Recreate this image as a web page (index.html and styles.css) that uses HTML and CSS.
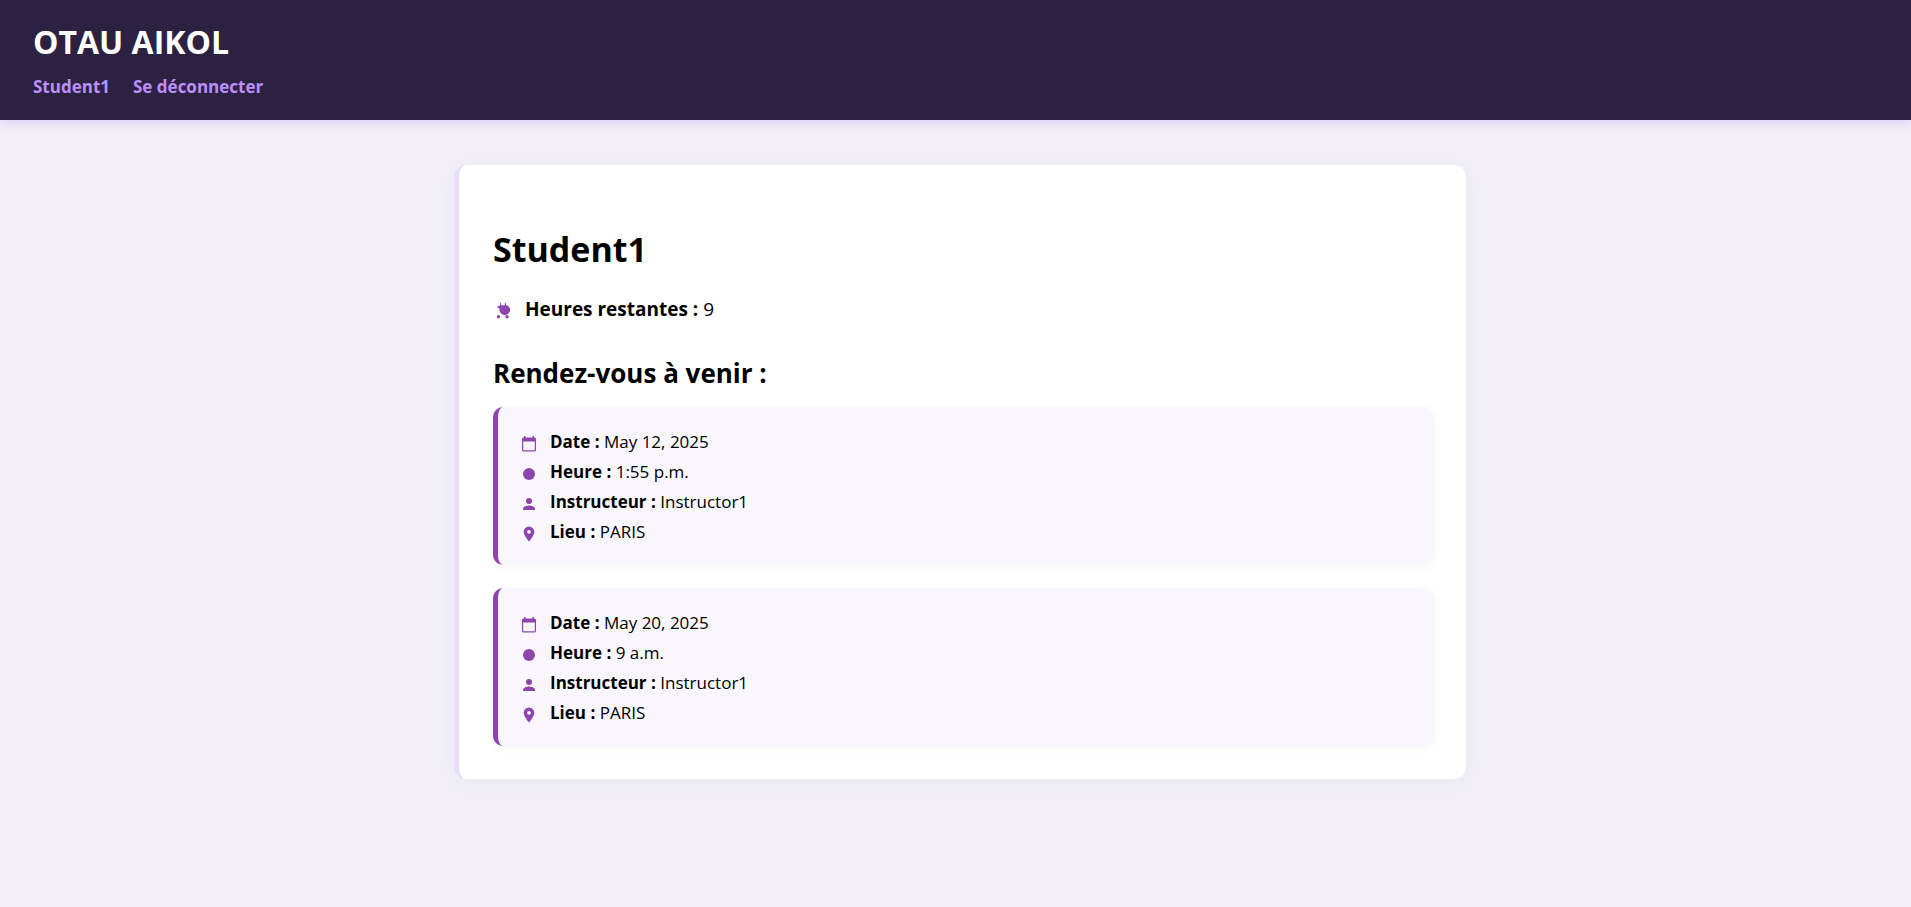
FILE: index.html
```html
<!DOCTYPE html>
<html lang="fr">
<head>
<meta charset="utf-8">
<title>OTAU AIKOL</title>
<link rel="stylesheet" href="styles.css">
</head>
<body>
<svg class="sprite" aria-hidden="true">
  <symbol id="calendar" viewBox="0 0 16 16"><path fill-rule="evenodd" d="M3 0h1.500v1.500h7V0H13v1.500h.5A1.500 1.500 0 0 1 15 3v11a1.500 1.500 0 0 1-1.500 1.500h-11A1.500 1.500 0 0 1 1 14V3a1.500 1.500 0 0 1 1.500-1.500H3zM2.200 5.500v8.700h11.600V5.500z"/></symbol>
  <symbol id="dot" viewBox="0 0 16 16"><circle cx="8" cy="8" r="6"/></symbol>
  <symbol id="person" viewBox="0 0 16 16"><circle cx="8" cy="5" r="3"/><path d="M2 14v-1.200c0-2 4-3.200 6-3.200s6 1.200 6 3.200V14z"/></symbol>
  <symbol id="pin" viewBox="0 0 16 16"><path fill-rule="evenodd" d="M8 .5a5.300 5.300 0 0 0-5.300 5.300C2.700 9.800 8 15.500 8 15.500s5.300-5.700 5.300-9.700A5.300 5.300 0 0 0 8 .5zM8 7.700a1.900 1.900 0 1 1 0-3.800 1.900 1.900 0 0 1 0 3.800z"/></symbol>
  <symbol id="hours" viewBox="0 0 16 16"><path d="M4 0h1.100v2.300h3.800V0H10v2.300h1l2 1.500 1 2v2.700l-2 2.500-2.500 1h-2L5 10.500 3.500 8.300V5.500L1.500 5V3.500L4 2.500z"/><circle cx="2.500" cy="13.700" r="1.700"/><circle cx="11" cy="13.700" r="1.700"/></symbol>
</svg>
<header class="site-header">
  <div class="brand">OTAU AIKOL</div>
  <nav class="nav">
    <a href="#">Student1</a>
    <a href="#">Se déconnecter</a>
  </nav>
</header>
<main class="page">
  <section class="profile">
    <h1 class="name">Student1</h1>
    <p class="hours"><svg class="icon"><use href="#hours"/></svg><span><strong>Heures restantes :</strong> 9</span></p>
    <h2 class="subtitle">Rendez-vous à venir :</h2>
    <ul class="appointments">
      <li class="appointment">
        <p class="row"><svg class="icon"><use href="#calendar"/></svg><span><strong>Date :</strong> May 12, 2025</span></p>
        <p class="row"><svg class="icon"><use href="#dot"/></svg><span><strong>Heure :</strong> 1:55 p.m.</span></p>
        <p class="row"><svg class="icon"><use href="#person"/></svg><span><strong>Instructeur :</strong> Instructor1</span></p>
        <p class="row"><svg class="icon"><use href="#pin"/></svg><span><strong>Lieu :</strong> PARIS</span></p>
      </li>
      <li class="appointment">
        <p class="row"><svg class="icon"><use href="#calendar"/></svg><span><strong>Date :</strong> May 20, 2025</span></p>
        <p class="row"><svg class="icon"><use href="#dot"/></svg><span><strong>Heure :</strong> 9 a.m.</span></p>
        <p class="row"><svg class="icon"><use href="#person"/></svg><span><strong>Instructeur :</strong> Instructor1</span></p>
        <p class="row"><svg class="icon"><use href="#pin"/></svg><span><strong>Lieu :</strong> PARIS</span></p>
      </li>
    </ul>
  </section>
</main>
</body>
</html>
```
FILE: styles.css
```css
* { box-sizing: border-box; }
body {
  margin: 0;
  background: #f1eff5;
  color: #000;
  font-family: "Open Sans", "Noto Sans", sans-serif;
  font-size: 17px;
}
h1, h2, p, ul { margin: 0; padding: 0; }
.sprite { display: none; }
.site-header {
  padding: 20px 33px;
  background: #2d2142;
  box-shadow: 0 2px 10px #dccbfa;
}
.brand { color: #fff; font-size: 32px; font-weight: 700; line-height: 44px; }
.nav { display: flex; gap: 23px; margin-top: 10px; }
.nav a {
  color: #bb8fff;
  font-size: 17px;
  font-weight: 700;
  line-height: 26px;
  text-decoration: none;
}
.page { padding: 45px 20px 45px 29px; }
.profile {
  max-width: 1012px;
  margin: 0 auto;
  padding: 56px 32px 33px 34px;
  background: #fff;
  border-left: 5px solid #e8dcff;
  border-radius: 12px;
  box-shadow: 0 4px 20px rgba(90, 50, 150, 0.03);
}
.name { font-size: 34px; line-height: 56px; }
.hours { display: flex; align-items: center; gap: 13px; margin-top: 16px; font-size: 19px; line-height: 32px; }
.hours .icon { margin-left: 3px; }
.subtitle { margin-top: 28px; font-size: 26px; line-height: 40px; }
.appointments { display: grid; gap: 23px; margin-top: 14px; list-style: none; }
.appointment {
  padding: 20px 23px 18px;
  background: #f9f7fd;
  border-left: 5px solid #8e44ad;
  border-radius: 10px;
  box-shadow: 0 2px 8px rgba(0, 0, 0, 0.04);
}
.row { display: flex; align-items: center; gap: 13px; font-size: 17px; line-height: 30px; }
.icon { flex: none; width: 16px; height: 16px; margin-top: 3px; fill: #8e44ad; }
```
